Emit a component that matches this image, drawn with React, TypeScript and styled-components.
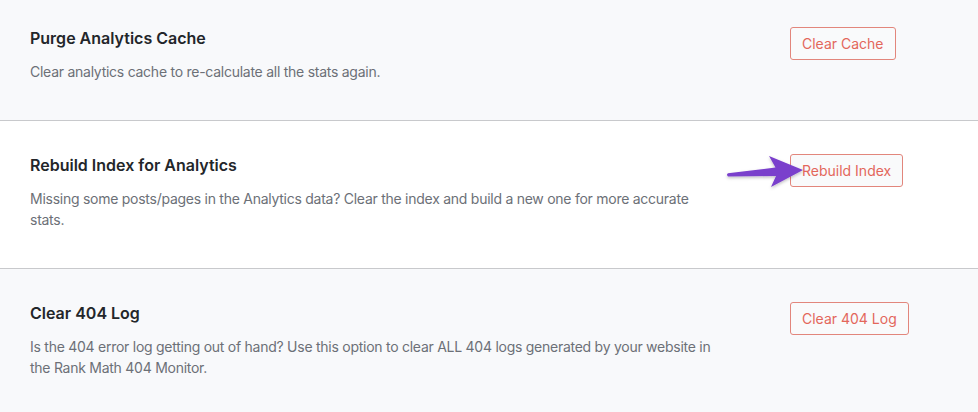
import React from "react";
import styled, { createGlobalStyle } from "styled-components";

const Global = createGlobalStyle`
  html, body { margin: 0; padding: 0; background: #f8f9fb; }
  body { font-family: Inter, "Noto Sans", sans-serif; -webkit-font-smoothing: antialiased; }
`;

const Page = styled.div`
  width: 978px;
  height: 412px;
  overflow: hidden;
  margin-top: -6px;
`;

const Section = styled.section<{ $white?: boolean; $last?: boolean }>`
  position: relative;
  display: grid;
  grid-template-columns: 760px auto;
  align-items: start;
  justify-items: start;
  padding: 33px 0 38px 30px;
  background: ${(p) => (p.$white ? "#ffffff" : "#f8f9fb")};
  border-bottom: ${(p) => (p.$last ? "none" : "1px solid #c8c9cc")};
`;

const Text = styled.div`
  display: flex;
  flex-direction: column;
  gap: 12px;
`;

const Title = styled.h3`
  margin: 0;
  font-size: 16px;
  line-height: 22px;
  font-weight: 600;
  color: #23262a;
`;

const Desc = styled.p`
  margin: 0;
  max-width: 690px;
  font-size: 14px;
  line-height: 21px;
  letter-spacing: -0.26px;
  color: #6c7077;
`;

const Button = styled.button`
  font-family: inherit;
  font-size: 14px;
  line-height: 31px;
  padding: 0 11px;
  color: #e3675b;
  background: #f9fafb;
  border: 1px solid #e2867c;
  border-radius: 3px;
  cursor: pointer;
  white-space: nowrap;
`;

const Arrow = styled.svg`
  position: absolute;
  left: 720px;
  top: 28px;
  width: 90px;
  height: 45px;
  overflow: visible;
`;

const PointerArrow = () => (
  <Arrow viewBox="0 0 90 45">
    <defs>
      <filter id="sh" x="-20%" y="-40%" width="140%" height="180%">
        <feDropShadow dx="0" dy="1.5" stdDeviation="1.5" floodColor="#000" floodOpacity="0.25" />
      </filter>
    </defs>
    <path
      d="M83 21 L49 7 L55.5 18.6 L8 24.2 Q6 25.8 8 27.4 L56 27 L51 38 Z"
      fill="#7a3fcc"
      filter="url(#sh)"
    />
  </Arrow>
);

export default function App() {
  return (
    <Page>
      <Global />
      <Section>
        <Text>
          <Title>Purge Analytics Cache</Title>
          <Desc>Clear analytics cache to re-calculate all the stats again.</Desc>
        </Text>
        <Button>Clear Cache</Button>
      </Section>
      <Section $white>
        <Text>
          <Title>Rebuild Index for Analytics</Title>
          <Desc>
            Missing some posts/pages in the Analytics data? Clear the index and build a new one for more
            accurate stats.
          </Desc>
        </Text>
        <Button>Rebuild Index</Button>
        <PointerArrow />
      </Section>
      <Section $last>
        <Text>
          <Title>Clear 404 Log</Title>
          <Desc>
            Is the 404 error log getting out of hand? Use this option to clear ALL 404 logs generated by your
            website in the Rank Math 404 Monitor.
          </Desc>
        </Text>
        <Button>Clear 404 Log</Button>
      </Section>
    </Page>
  );
}
